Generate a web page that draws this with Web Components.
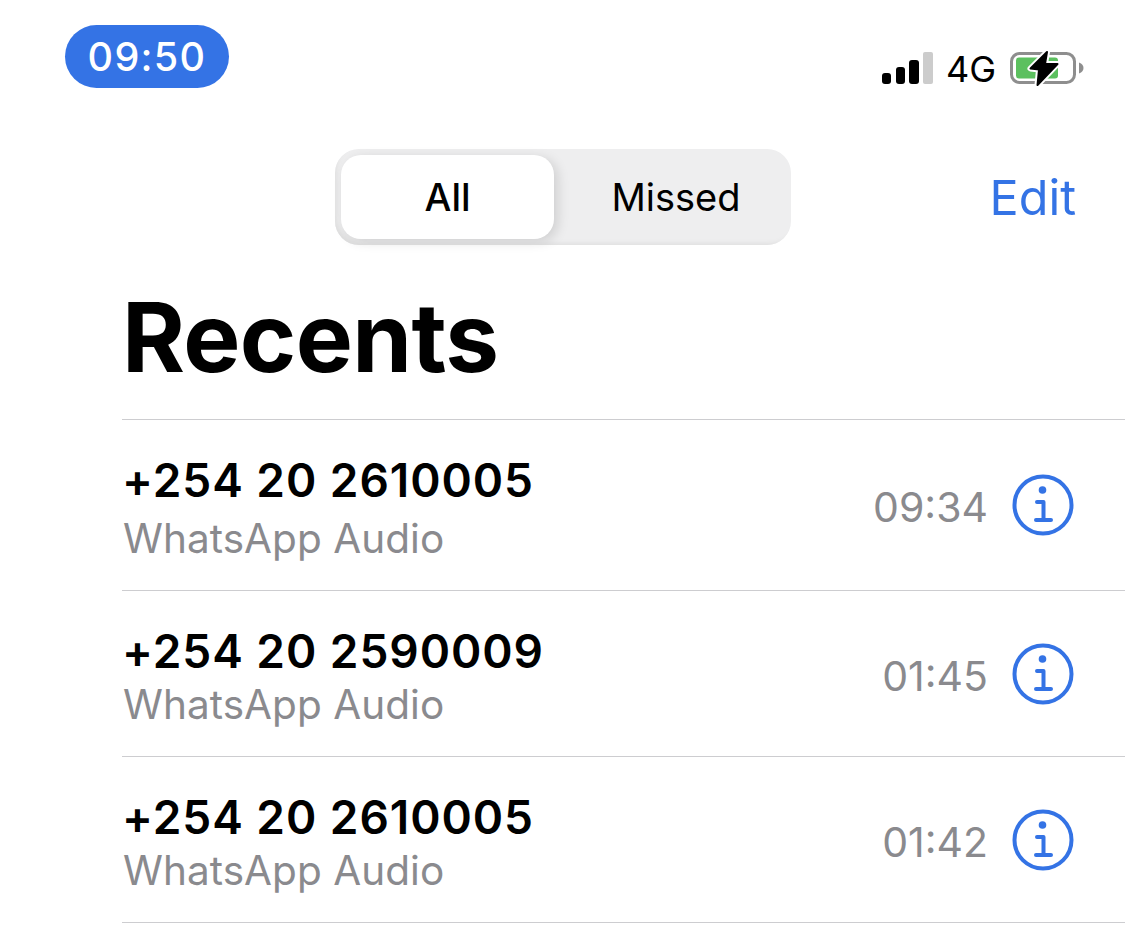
<!DOCTYPE html>
<html>
<head>
<meta charset="utf-8">
<style>
    html, body { margin: 0; background: #fff; overflow: hidden; }
    body { font-family: Inter, "Liberation Sans", sans-serif; color: #000; }
</style>
</head>
<body>
<status-bar time="09:50"></status-bar>
<nav-bar></nav-bar>
<large-title>Recents</large-title>
<recents-list>
    <recent-row number="+254 20 2610005" kind="WhatsApp Audio" time="09:34" first></recent-row>
    <recent-row number="+254 20 2590009" kind="WhatsApp Audio" time="01:45"></recent-row>
    <recent-row number="+254 20 2610005" kind="WhatsApp Audio" time="01:42"></recent-row>
</recents-list>

<script>
class StatusBar extends HTMLElement {
    constructor() {
        super();
        this.shadowDOM = this.attachShadow({mode: 'open'});
    }

    connectedCallback() {
        const time = this.getAttribute('time') || '';
        this.shadowRoot.innerHTML = `
            <style>
                :host {
                    display: flex;
                    justify-content: space-between;
                    height: 149px;
                    box-sizing: border-box;
                    padding: 25px 41px 0 65px;
                }
                .pill {
                    width: 164px;
                    height: 63px;
                    border-radius: 32px;
                    background: #3473e5;
                    color: #fff;
                    font-size: 39.500px;
                    font-weight: 500;
                    letter-spacing: 1.300px;
                    display: flex;
                    align-items: center;
                    justify-content: center;
                }
                .icons {
                    display: flex;
                    align-items: center;
                    height: 34px;
                    margin-top: 27px;
                }
                .net { font-size: 36px; font-weight: 400; margin: 0 14px 0 12px; }
                svg { display: block; overflow: visible; }
            </style>
            <div class="pill">${time}</div>
            <div class="icons">
                <svg width="52" height="34" viewBox="0 0 52 34">
                    <rect x="0" y="21" width="9" height="11" rx="3" fill="#000"/>
                    <rect x="14" y="15" width="9" height="17" rx="3" fill="#000"/>
                    <rect x="27" y="8" width="10" height="24" rx="3" fill="#000"/>
                    <rect x="41" y="0" width="10" height="32" rx="2" fill="#ccc"/>
                </svg>
                <span class="net">4G</span>
                <svg width="74" height="36" viewBox="0 0 74 36">
                    <rect x="1.500" y="2.500" width="63" height="29" rx="8" fill="none" stroke="#8e8e8e" stroke-width="3"/>
                    <rect x="6" y="6.500" width="42" height="21" rx="3" fill="#5cc05f"/>
                    <path d="M69 11.500c3 1 4.500 3 4.500 5.500s-1.500 4.500-4.500 5.500z" fill="#8e8e8e"/>
                    <path d="M37 1 L20.500 17.500 L29 18.500 L27.500 34 L47.500 13 L35 13 Z" fill="#fff" stroke="#fff" stroke-width="6" stroke-linejoin="round"/>
                    <path d="M37 1 L20.500 17.500 L29 18.500 L27.500 34 L47.500 13 L35 13 Z" fill="#000" stroke="#000" stroke-width="2" stroke-linejoin="round"/>
                </svg>
            </div>
        `;
    }
}

class NavBar extends HTMLElement {
    constructor() {
        super();
        this.attachShadow({mode: 'open'});
        this.shadowRoot.innerHTML = `
            <style>
                :host {
                    display: flex;
                    align-items: center;
                    height: 96px;
                    padding-left: 335px;
                    position: relative;
                }
                .seg {
                    width: 456px;
                    height: 96px;
                    box-sizing: border-box;
                    padding: 6px;
                    border-radius: 24px;
                    background: #eeeeef;
                    display: flex;
                    font-size: 38px;
                    box-shadow: inset 4px -4px 5px -3px #dcdcdc;
                }
                .seg div { display: flex; align-items: center; justify-content: center; }
                .all {
                    width: 213px;
                    background: #fff;
                    border-radius: 20px;
                    font-weight: 500;
                    box-shadow: 4px 3px 12px rgba(0, 0, 0, .13);
                }
                .missed { flex: 1; padding-left: 13px; font-weight: 400; }
                .edit {
                    margin-left: auto;
                    margin-right: 49px;
                    color: #3473e5;
                    font-size: 48.500px;
                    font-weight: 400;
                }
            </style>
            <div class="seg">
                <div class="all">All</div>
                <div class="missed">Missed</div>
            </div>
            <span class="edit">Edit</span>
        `;
    }
}

class LargeTitle extends HTMLElement {
    constructor() {
        super();
        this.attachShadow({mode: 'open'});
        this.shadowRoot.innerHTML = `
            <style>
                :host {
                    display: block;
                    height: 174px;
                    box-sizing: border-box;
                    padding: 36px 0 0 122px;
                    font-size: 96px;
                    font-weight: 700;
                    line-height: 113px;
                    letter-spacing: -0.6px;
                }
            </style>
            <slot></slot>
        `;
    }
}

class RecentsList extends HTMLElement {
    constructor() {
        super();
        this.attachShadow({mode: 'open'});
        this.shadowRoot.innerHTML = `
            <style>
                :host { display: block; margin-left: 122px; border-bottom: 1px solid #cdcdd0; }
            </style>
            <slot></slot>
        `;
    }
}

class RecentRow extends HTMLElement {
    constructor() {
        super();
        this.attachShadow({mode: 'open'});
    }

    connectedCallback() {
        const number = this.getAttribute('number') || '';
        const kind = this.getAttribute('kind') || '';
        const time = this.getAttribute('time') || '';
        this.shadowRoot.innerHTML = `
            <style>
                :host {
                    display: flex;
                    align-items: center;
                    height: 166px;
                    box-sizing: border-box;
                    border-top: 1px solid #cdcdd0;
                    padding-left: 0;
                    padding-right: 51px;
                }
                :host([first]) { height: 171px; }
                .text { flex: 1; margin-top: 9px; }
                :host([first]) .text { margin-top: 8px; }
                .number {
                    font-size: 46px;
                    font-weight: 600;
                    line-height: 54px;
                    letter-spacing: .95px;
                }
                .kind {
                    font-size: 40.500px;
                    line-height: 54px;
                    padding-left: 1px;
                    letter-spacing: .05px;
                    color: #8a8a8e;
                }
                :host([first]) .kind { margin-top: 5px; }
                .time {
                    font-size: 41px;
                    color: #8a8a8e;
                    margin: 4px 24px 0 0;
                }
                svg { display: block; }
            </style>
            <div class="text">
                <div class="number">${number}</div>
                <div class="kind">${kind}</div>
            </div>
            <span class="time">${time}</span>
            <svg width="62" height="62" viewBox="0 0 62 62" fill="none" stroke="#3473e5">
                <circle cx="31" cy="31" r="28.500" stroke-width="4"/>
                <circle cx="30.500" cy="16" r="3.800" fill="#3473e5" stroke="none"/>
                <path d="M25 28h6.500v18M24 46h15" stroke-width="4" stroke-linecap="round" stroke-linejoin="round"/>
            </svg>
        `;
    }
}

customElements.define('status-bar', StatusBar);
customElements.define('nav-bar', NavBar);
customElements.define('large-title', LargeTitle);
customElements.define('recents-list', RecentsList);
customElements.define('recent-row', RecentRow);
</script>
</body>
</html>
